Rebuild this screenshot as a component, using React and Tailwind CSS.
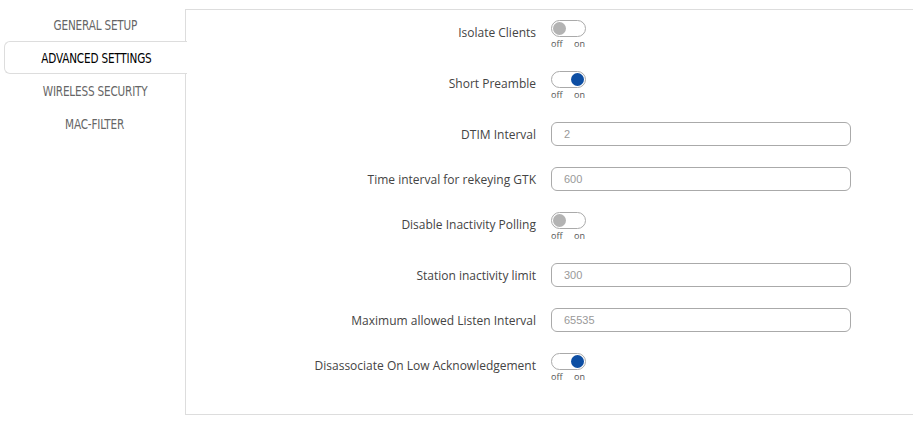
import React, { useState } from 'react';

const tabs = ['GENERAL SETUP', 'ADVANCED SETTINGS', 'WIRELESS SECURITY', 'MAC-FILTER'];

const rows = [
  { label: 'Isolate Clients', type: 'switch', value: false },
  { label: 'Short Preamble', type: 'switch', value: true },
  { label: 'DTIM Interval', type: 'input', value: '2' },
  { label: 'Time interval for rekeying GTK', type: 'input', value: '600' },
  { label: 'Disable Inactivity Polling', type: 'switch', value: false },
  { label: 'Station inactivity limit', type: 'input', value: '300' },
  { label: 'Maximum allowed Listen Interval', type: 'input', value: '65535' },
  { label: 'Disassociate On Low Acknowledgement', type: 'switch', value: true },
];

const tabFont = "font-['Liberation_Sans_Narrow','DejaVu_Sans_Condensed',sans-serif]";

function Toggle({ on }) {
  return (
    <div className="flex flex-col">
      <div className="w-[35px] h-[17px] rounded-full border border-[#aaa] bg-white relative">
        <span
          className={
            'absolute top-[1px] w-[13px] h-[13px] rounded-full ' +
            (on ? 'right-[1px] bg-[#0d4ea3]' : 'left-[1px] bg-[#b3b3b3]')
          }
        />
      </div>
      <div className="flex text-[9px] leading-[12px] text-[#555] mt-[1px] font-['Open_Sans',sans-serif]">
        <span className="w-[23px]">off</span>
        <span>on</span>
      </div>
    </div>
  );
}

function App() {
  const [active] = useState(1);

  return (
    <div className="w-[913px] h-[428px] bg-white flex font-['Open_Sans',sans-serif]">
      <div className="w-[186px] shrink-0 pt-[8px] pl-[4px] relative z-10">
        {tabs.map((t, i) => (
          <div
            key={t}
            className={
              'h-[33px] flex items-center justify-center text-[14px] tracking-[-0.2px] ' +
              tabFont +
              ' ' +
              (i === active
                ? 'bg-white border border-r-0 border-[#ddd] rounded-l-md text-black -mr-px'
                : 'text-[#666]')
            }
          >
            <span className="inline-block scale-x-[0.83] translate-y-[1px]">{t}</span>
          </div>
        ))}
      </div>
      <div className="flex-1 mt-[9px] h-[406px] border-l border-t border-b border-[#ddd] -ml-px pt-[10px]">
        {rows.map((r) => (
          <div
            key={r.label}
            className={'flex ' + (r.type === 'switch' ? 'h-[51px]' : 'h-[45px]')}
          >
            <div
              className={
                'w-[350px] text-right text-[12px] text-[#444] ' +
                (r.type === 'switch' ? 'leading-[16px] pt-[5px]' : 'leading-[24px] pt-[1px]')
              }
            >
              {r.label}
            </div>
            <div className="ml-[15px]">
              {r.type === 'switch' ? (
                <Toggle on={r.value} />
              ) : (
                <input
                  readOnly
                  value={r.value}
                  className="block w-[300px] h-[24px] border border-[#aaa] rounded-[6px] px-[12px] text-[11px] text-[#999] font-['Liberation_Sans',sans-serif] outline-none"
                />
              )}
            </div>
          </div>
        ))}
      </div>
    </div>
  );
}

export default App;
